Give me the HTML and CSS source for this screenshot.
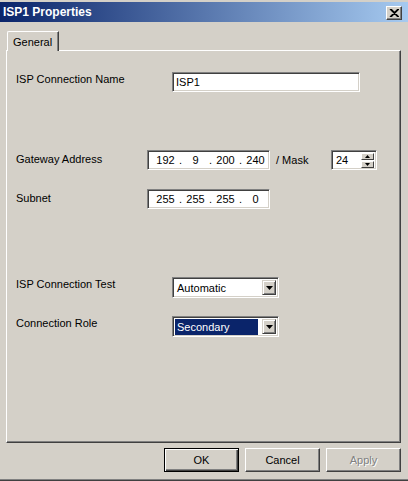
FILE: index.html
```html
<!DOCTYPE html>
<html>
<head>
<meta charset="utf-8">
<title>ISP1 Properties</title>
<link rel="stylesheet" href="styles.css">
</head>
<body>
<div class="window">
  <div class="titlebar">
    <span class="title">ISP1 Properties</span>
    <span class="close">
      <svg width="10" height="8" viewBox="0 0 10 8"><path d="M1 0 L9 8 M9 0 L1 8 M2 0 L10 8 M10 0 L2 8" stroke="#000" stroke-width="1.2" fill="none"/></svg>
    </span>
  </div>
  <div class="tabs"><div class="tab">General</div></div>
  <div class="panel">
    <div class="row row-name">
      <span class="lbl lbl-wide">ISP Connection Name</span>
      <div class="field name-field">ISP1</div>
    </div>
    <div class="row row-gw">
      <span class="lbl lbl-ip">Gateway Address</span>
      <div class="field ip">
        <span class="seg">192</span><span class="dot">.</span><span class="seg">9</span><span class="dot">.</span><span class="seg">200</span><span class="dot">.</span><span class="seg">240</span>
      </div>
      <span class="mask">/ Mask</span>
      <div class="field spin">
        <span class="spin-val">24</span>
        <div class="spinbtns">
          <span class="sbtn"><svg width="5" height="3" viewBox="0 0 5 3"><path d="M2.5 0 L5 3 L0 3 Z" fill="#000"/></svg></span>
          <span class="sbtn"><svg width="5" height="3" viewBox="0 0 5 3"><path d="M0 0 L5 0 L2.5 3 Z" fill="#000"/></svg></span>
        </div>
      </div>
    </div>
    <div class="row row-sub">
      <span class="lbl lbl-ip">Subnet</span>
      <div class="field ip">
        <span class="seg">255</span><span class="dot">.</span><span class="seg">255</span><span class="dot">.</span><span class="seg">255</span><span class="dot">.</span><span class="seg">0</span>
      </div>
    </div>
    <div class="row row-test">
      <span class="lbl lbl-wide lbl-sel">ISP Connection Test</span>
      <div class="field select">
        <span class="sel-text">Automatic</span>
        <span class="arrow"><svg width="7" height="4" viewBox="0 0 7 4"><path d="M0 0 L7 0 L3.5 4 Z" fill="#000"/></svg></span>
      </div>
    </div>
    <div class="row row-role">
      <span class="lbl lbl-wide lbl-sel">Connection Role</span>
      <div class="field select">
        <span class="sel-text selected">Secondary</span>
        <span class="arrow"><svg width="7" height="4" viewBox="0 0 7 4"><path d="M0 0 L7 0 L3.5 4 Z" fill="#000"/></svg></span>
      </div>
    </div>
  </div>
  <div class="buttons">
    <button class="btn btn-default">OK</button>
    <button class="btn">Cancel</button>
    <button class="btn btn-disabled">Apply</button>
  </div>
</div>
</body>
</html>
```
FILE: styles.css
```css
html, body {
  margin: 0;
  padding: 0;
  background: #d4d0c8;
}
.window {
  width: 408px;
  height: 481px;
  box-sizing: border-box;
  background: #d4d0c8;
  font-family: "Liberation Sans", Arial, sans-serif;
  font-size: 11px;
  color: #000;
  box-shadow: inset 0 -1px #404040, inset 0 -2px #808080;
  overflow: hidden;
}
.titlebar {
  height: 20px;
  margin-top: 2px;
  display: flex;
  align-items: center;
  justify-content: space-between;
  padding: 0 6px 0 3px;
  background: linear-gradient(to right, #0a246a, #a6caf0);
}
.title {
  color: #fff;
  font-weight: bold;
  font-size: 12px;
}
.close {
  width: 16px;
  height: 14px;
  box-sizing: border-box;
  background: #d4d0c8;
  border: 1px solid;
  border-color: #fff #404040 #404040 #fff;
  box-shadow: inset -1px -1px #808080;
  display: flex;
  align-items: center;
  justify-content: center;
  margin-top: 1px;
}
.close svg { display: block; margin-left: -1px; }
.tabs {
  height: 28px;
  box-sizing: border-box;
  padding: 9px 0 0 7px;
  display: flex;
  align-items: flex-start;
}
.tab {
  position: relative;
  z-index: 1;
  width: 52px;
  height: 20px;
  box-sizing: border-box;
  background: #d4d0c8;
  border-top: 1px solid #fff;
  border-left: 1px solid #fff;
  border-right: 1px solid #404040;
  box-shadow: inset -1px 0 #808080;
  border-top-left-radius: 2px;
  padding: 4px 0 0 5px;
  line-height: 13px;
  margin-bottom: -1px;
}
.panel {
  margin: 0 7px 0 6px;
  height: 393px;
  box-sizing: border-box;
  border: 1px solid;
  border-color: #fff #404040 #404040 #fff;
  box-shadow: inset -1px -1px #808080;
  padding: 21px 0 0 9px;
}
.row {
  display: flex;
  align-items: flex-start;
}
.row-gw { margin-top: 58px; }
.row-sub { margin-top: 19px; }
.row-test { margin-top: 68px; }
.row-role { margin-top: 18px; }
.lbl {
  line-height: 14px;
  white-space: nowrap;
}
.lbl-wide { width: 156px; }
.lbl-ip { width: 131px; padding-top: 2px; }
.field {
  height: 20px;
  box-sizing: border-box;
  background: #fff;
  border: 1px solid;
  border-color: #808080 #fff #fff #808080;
  box-shadow: inset 1px 1px #404040, inset -1px -1px #d4d0c8;
  line-height: 18px;
}
.name-field {
  width: 188px;
  padding-left: 3px;
}
.ip {
  width: 123px;
  display: flex;
  padding-left: 5px;
}
.seg {
  width: 25px;
  text-align: center;
}
.dot {
  width: 5px;
  text-align: center;
}
.mask {
  width: 61px;
  padding-left: 6px;
  box-sizing: border-box;
  line-height: 20px;
}
.spin {
  width: 46px;
  display: flex;
  justify-content: space-between;
  align-items: center;
  padding: 0 2px 0 4px;
}
.spinbtns {
  display: flex;
  flex-direction: column;
  gap: 1px;
}
.sbtn {
  width: 13px;
  height: 7px;
  box-sizing: border-box;
  background: #d4d0c8;
  border: 1px solid;
  border-color: #fff #404040 #404040 #fff;
  display: flex;
  align-items: center;
  justify-content: center;
}
.sbtn svg { display: block; }
.select {
  width: 107px;
  height: 21px;
  display: flex;
  align-items: center;
  justify-content: space-between;
  padding: 0 2px 0 2px;
  line-height: 16px;
}
.sel-text {
  padding-left: 2px;
  height: 16px;
}
.selected {
  background: #0a246a;
  color: #fff;
  width: 83px;
  box-sizing: border-box;
  padding-left: 2px;
}
.arrow {
  width: 14px;
  height: 15px;
  box-sizing: border-box;
  background: #d4d0c8;
  border: 1px solid;
  border-color: #d4d0c8 #404040 #404040 #d4d0c8;
  box-shadow: inset 1px 1px #fff, inset -1px -1px #808080;
  display: flex;
  align-items: center;
  justify-content: center;
}
.arrow svg { display: block; }
.buttons {
  display: flex;
  justify-content: flex-end;
  gap: 6px;
  margin-top: 5px;
  padding-right: 7px;
}
.btn {
  width: 75px;
  height: 24px;
  box-sizing: border-box;
  margin: 0;
  padding: 0;
  font-family: "Liberation Sans", Arial, sans-serif;
  font-size: 11px;
  color: #000;
  background: #d4d0c8;
  border: 1px solid;
  border-color: #fff #404040 #404040 #fff;
  box-shadow: inset -1px -1px #808080;
}
.btn-default {
  border: 1px solid #000;
  box-shadow: inset 1px 1px #fff, inset -1px -1px #404040, inset -2px -2px #808080;
}
.btn-disabled {
  color: #808080;
  text-shadow: 1px 1px #fff;
}
```
